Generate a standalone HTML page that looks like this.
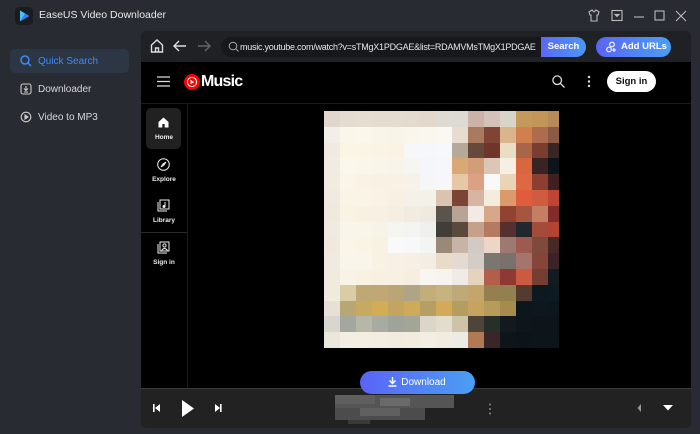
<!DOCTYPE html>
<html><head><meta charset="utf-8"><style>
*{margin:0;padding:0;box-sizing:border-box}
body{width:700px;height:434px;background:#282b31;font-family:"Liberation Sans",sans-serif;position:relative;overflow:hidden;color:#fff}
.abs{position:absolute}
.nav{position:absolute;left:10px;width:119px;height:24px;border-radius:5px;font-size:10px;color:#d5d7db;display:flex;align-items:center;padding-left:28px}
.nav svg{position:absolute;left:10px;top:6px}
#art{position:absolute;left:324px;top:111px;width:235px;height:237px;display:grid;grid-template-columns:repeat(14,16px) 11px;grid-template-rows:repeat(15,15.8px);overflow:hidden}
.yn{position:absolute;left:141px;width:46px;text-align:center;font-size:6.5px;font-weight:bold;color:#eee}
</style></head><body>
<svg class="abs" style="left:15px;top:7px" width="18" height="18" viewBox="0 0 18 18"><rect width="18" height="18" rx="4" fill="#1a1c20"/><path d="M5 3.5 L14.5 9 L5 14.5Z" fill="#3b7cf5"/><path d="M5 3.5 L10 6.5 L5 14.5Z" fill="#44c8f0"/></svg>
<div class="abs" style="left:39px;top:9px;font-size:10.5px;color:#e8e8e8">EaseUS Video Downloader</div>
<svg class="abs" style="left:588px;top:9px" width="104" height="14" viewBox="0 0 104 14" fill="none" stroke="#bbb" stroke-width="1.1"><path d="M1 3 L4 1 L6 3 L8 1 L11 3 L10 6 L9 6 L9 12 L3 12 L3 6 L2 6Z"/><rect x="24" y="1.5" width="10" height="10"/><path d="M26.5 5 L29 7.5 L31.5 5" fill="#bbb"/><path d="M46 8 L56 8"/><rect x="67" y="2" width="9" height="9"/><path d="M88 2 L98 12 M98 2 L88 12"/></svg>
<div class="nav" style="top:49px;background:#2c3645;color:#3d8cf5"><svg width="12" height="12" viewBox="0 0 12 12" fill="none" stroke="#3d8cf5" stroke-width="1.5"><circle cx="5" cy="5" r="4"/><path d="M8 8 L11 11"/></svg>Quick Search</div>
<div class="nav" style="top:77px"><svg width="12" height="12" viewBox="0 0 12 12" fill="none" stroke="#ccc" stroke-width="1.1"><rect x="1" y="1" width="10" height="10" rx="2"/><path d="M6 3 L6 7 M4 5.5 L6 7.5 L8 5.5 M4 9 L8 9"/></svg>Downloader</div>
<div class="nav" style="top:105px"><svg width="12" height="12" viewBox="0 0 12 12" fill="none" stroke="#ccc" stroke-width="1.1"><circle cx="6" cy="6" r="4.8"/><path d="M5 4 L8 6 L5 8Z" fill="#ccc"/></svg>Video to MP3</div>
<div class="abs" style="left:141px;top:31px;width:550px;height:397px;background:#222222;border-radius:6px;overflow:hidden">
 <div class="abs" style="left:0;top:0;width:550px;height:31px;background:#1f2124"></div>
 <div class="abs" style="left:0;top:31px;width:550px;height:326px;background:#000"></div>
 <div class="abs" style="left:0;top:357px;width:550px;height:1px;background:#3a3a3a"></div>
</div>
<svg class="abs" style="left:150px;top:38px" width="65" height="16" viewBox="0 0 65 16" fill="none" stroke-width="1.4"><path d="M1.5 7 L7 2 L12.5 7 L12.5 14 L1.5 14Z M5.5 14 L5.5 10 L8.5 10 L8.5 14" stroke="#ddd"/><path d="M36 8 L24 8 M29 3 L24 8 L29 13" stroke="#ddd"/><path d="M48 8 L60 8 M55 3 L60 8 L55 13" stroke="#666"/></svg>
<div class="abs" style="left:221px;top:37px;width:332px;height:20px;border-radius:10px;background:#16181b"></div>
<svg class="abs" style="left:228px;top:41px" width="11" height="11" viewBox="0 0 11 11" fill="none" stroke="#aaa" stroke-width="1"><circle cx="5" cy="5" r="3.8"/><path d="M7.8 7.8 L10.5 10.5"/></svg>
<div class="abs" style="left:240px;top:37px;width:301px;height:20px;overflow:hidden;white-space:nowrap;font-size:9px;letter-spacing:-0.25px;line-height:20px;color:#e6e6e6">music.youtube.com/watch?v=sTMgX1PDGAE&amp;list=RDAMVMsTMgX1PDGAE</div>
<div class="abs" style="left:541px;top:37px;width:45px;height:20px;border-radius:0 10px 10px 0;background:linear-gradient(90deg,#5b67f6,#4a98f4);font-size:9.5px;line-height:20px;text-align:center;font-weight:bold">Search</div>
<div class="abs" style="left:596px;top:37px;width:75px;height:20px;border-radius:10px;background:linear-gradient(90deg,#5b64f6,#4a9ef5);font-size:9.5px;line-height:20px;padding-left:25px;font-weight:bold">Add URLs</div>
<svg class="abs" style="left:606px;top:41px" width="12" height="12" viewBox="0 0 12 12" fill="none" stroke="#fff" stroke-width="1.1"><circle cx="6" cy="3.5" r="2.3"/><circle cx="3" cy="8.5" r="2.3"/><path d="M8 7 L8 11 M6 9 L10 9"/></svg>
<svg class="abs" style="left:157px;top:76px" width="13" height="11" viewBox="0 0 13 11" stroke="#ddd" stroke-width="1.3"><path d="M0 1 H13 M0 5.5 H13 M0 10 H13"/></svg>
<svg class="abs" style="left:184px;top:74px" width="16" height="16" viewBox="0 0 16 16"><circle cx="8" cy="8" r="8" fill="#f00"/><circle cx="8" cy="8" r="4.6" fill="none" stroke="#fff" stroke-width="1"/><path d="M6.5 5.7 L10.3 8 L6.5 10.3Z" fill="#fff"/></svg>
<div class="abs" style="left:201px;top:73px;font-size:16px;font-weight:bold;letter-spacing:-0.8px;color:#fff">Music</div>
<svg class="abs" style="left:552px;top:75px" width="13" height="13" viewBox="0 0 13 13" fill="none" stroke="#ddd" stroke-width="1.3"><circle cx="5.2" cy="5.2" r="4.3"/><path d="M8.4 8.4 L12.5 12.5"/></svg>
<svg class="abs" style="left:587px;top:75px" width="4" height="13"><circle cx="2" cy="2" r="1.2" fill="#ddd"/><circle cx="2" cy="6.5" r="1.2" fill="#ddd"/><circle cx="2" cy="11" r="1.2" fill="#ddd"/></svg>
<div class="abs" style="left:607px;top:71px;width:49px;height:21px;border-radius:11px;background:#fff;color:#0f0f0f;font-size:9.5px;line-height:21px;text-align:center;font-weight:bold">Sign in</div>
<div class="abs" style="left:141px;top:103px;width:550px;height:1px;background:#1a1a1a"></div>
<div class="abs" style="left:187px;top:104px;width:1px;height:284px;background:#1c1c1c"></div>
<div class="abs" style="left:146px;top:108px;width:35px;height:41px;border-radius:5px;background:#212121"></div>
<svg class="abs" style="left:158px;top:117px" width="11" height="11" viewBox="0 0 11 11"><path d="M5.5 0.5 L10.5 5 L10.5 10.5 L0.5 10.5 L0.5 5Z" fill="#fff"/><rect x="4.3" y="7" width="2.4" height="3.5" fill="#212121"/></svg>
<div class="yn" style="top:134px">Home</div>
<svg class="abs" style="left:157px;top:158px" width="13" height="13" viewBox="0 0 13 13" fill="none" stroke="#eee" stroke-width="1"><circle cx="6.5" cy="6.5" r="5.8"/><path d="M9 4 L7 7 L4 9 L6 6Z" fill="#eee"/></svg>
<div class="yn" style="top:176px">Explore</div>
<svg class="abs" style="left:157px;top:199px" width="13" height="13" viewBox="0 0 13 13" fill="none" stroke="#eee" stroke-width="1"><rect x="3" y="1" width="9" height="9"/><path d="M1 3 L1 12 L10 12"/><path d="M8 3 L8 7.5" /><circle cx="7" cy="7.5" r="1" fill="#eee"/></svg>
<div class="yn" style="top:217px">Library</div>
<div class="abs" style="left:141px;top:232px;width:46px;height:1px;background:#2a2a2a"></div>
<svg class="abs" style="left:157px;top:241px" width="13" height="13" viewBox="0 0 13 13" fill="none" stroke="#eee" stroke-width="1"><rect x="3" y="1" width="9" height="9"/><path d="M1 3 L1 12 L10 12"/><circle cx="7.5" cy="4.5" r="1.6"/><path d="M4.5 9.5 Q7.5 5.5 10.5 9.5"/></svg>
<div class="yn" style="top:259px">Sign in</div>
<div id="art"></div>
<script>
var c=["e0d8cc e3dccf e5ddd0 e4dccf e4dccf e3dbce e2d9cc e0dbd2 dcdad3 cbb3a8 d4c1b8 d8d5c8 c49a5a c39558 b88a5a",
"f2efe8 fbf6ea fbf7ea faf5e9 f9f4e8 faf6ec faf7ee f9f8f2 e8dcd0 a97a60 7f4433 dab48c d17f4f ad6b4f 8b5a44",
"f0ebe1 fbf5e6 fbf5e5 faf4e4 faf3e3 f6f7fa f6f7fb f7f8fb b4aa9a 654a3c 70352a ebdcc4 a86548 7a3e30 3a2424",
"f1ece2 fbf7ed fbf6ea faf5ea f9f4e9 f7f5ef f5f6f9 f6f7fa d9a874 d49d7a dcc7b5 f5efe4 d9663c 3a2323 0d151b",
"f1ebe0 fbf5e8 faf3e5 f9f1e3 f9f2e4 f7f2e8 f6f6f8 f7f7f9 e6c9a4 dca083 f9f9fa ead4b7 df6844 8c3e30 40201f",
"f0ebe1 faf4e7 faf4e6 f9f3e5 f7f0e3 f5f0e9 f4f1e9 dcc3b0 7c4435 d6b6a2 f4ecdd dc9a6b e05c3b d05c40 c04432",
"f0e9dd f9f3e4 f8f1e2 f8f0e2 f6eee0 f2ebdf eeeae0 5b544a b8a396 f2ebe5 d6a788 924232 a55540 c47e63 7f2c2b",
"f0ebe1 f9f5ea f9f5e9 f7f3e8 f7f5ef f4f4f2 f0f0ec 3f3e39 5a4a3e c5a18a b57a62 56302c 21272d a44c3c b34433",
"f0e9dc faf5e6 f9f4e4 f8f2e2 f9f9fb f7f8fa f3f5f5 9a8977 c8b4a6 d3cac3 edd5c7 9c7a73 9e5a4f 7e4a3e 472827",
"efebe2 f9f5ea f9f5ea f8f2e5 f7f1e5 f5efe5 f3ede3 e8dcc8 e5dad2 d3cdc6 7a7672 7a706c a7736d 86453a 3b2226",
"f0eadf f9f3e6 f9f2e2 f8f0e0 f8f1e2 f6efe1 f8f6f0 f5f4ef f0ebe4 e6d3be b35e4a 8e3a32 cc5a40 763d33 131b22",
"f0ebdf dacda5 bea874 c0a874 bba574 aea486 c3ad79 c7b37f bfa978 c2a66c 957f4f 92804e 553a30 0d1820 0e1a22",
"e5e1d6 b8a673 c7a95f d3ad55 c3a560 cfaa58 b59f64 d4aa58 b39e60 c6a45f b79c59 a58c4e 0b161d 0c171e 0c161d",
"d8d6cf a4a79f b6b6ab a8aba2 a0a39a a2a598 dcd6c8 e3ddcd cdc3a8 4f4439 243029 121a1e 0e161c 0d151b 0d151b",
"ece7dc f2eee4 f4eee2 f3ede1 f1ebdf f2ecdf f3eee3 f1ebe0 ecebe5 b07a55 3b2627 0d151b 0c141a 0d151b 0d151b"];
var h="";c.forEach(function(r){r.split(" ").forEach(function(x){h+='<div style="background:#'+x+'"></div>'})});
document.getElementById("art").innerHTML=h;
</script>
<div class="abs" style="left:360px;top:371px;width:115px;height:23px;border-radius:12px;background:linear-gradient(90deg,#5a63f6,#4a9ff5);font-size:10px;line-height:23px;text-align:center;padding-left:12px">Download</div>
<svg class="abs" style="left:388px;top:377px" width="9" height="10" viewBox="0 0 9 10" stroke="#fff" stroke-width="1.4" fill="none"><path d="M4.5 0 L4.5 6 M1.5 3.5 L4.5 6.5 L7.5 3.5 M0.5 9 L8.5 9"/></svg>
<svg class="abs" style="left:153px;top:400px" width="80" height="18" viewBox="0 0 80 18" fill="#fff"><rect x="0" y="4" width="1.6" height="8"/><path d="M2 8 L7 4 L7 12Z"/><path d="M29 0 L41 8.5 L29 17Z"/><path d="M62 4 L67 8 L62 12Z"/><rect x="67" y="4" width="1.6" height="8"/></svg>
<div class="abs" style="left:335px;top:395px;width:119px;height:13px;background:#555"></div>
<div class="abs" style="left:335px;top:395px;width:40px;height:9px;background:#5f5f5f"></div>
<div class="abs" style="left:380px;top:398px;width:30px;height:8px;background:#6a6a6a"></div>
<div class="abs" style="left:335px;top:408px;width:90px;height:12px;background:#4c4c4c"></div>
<div class="abs" style="left:360px;top:408px;width:40px;height:8px;background:#606060"></div>
<div class="abs" style="left:348px;top:420px;width:22px;height:4px;background:#3a3a3a"></div>
<svg class="abs" style="left:488px;top:403px" width="4" height="12"><circle cx="2" cy="1.5" r="1" fill="#888"/><circle cx="2" cy="6" r="1" fill="#888"/><circle cx="2" cy="10.5" r="1" fill="#888"/></svg>
<svg class="abs" style="left:637px;top:403px" width="40" height="10" viewBox="0 0 40 10"><path d="M4 1 L0.5 5 L4 9Z" fill="#999"/><path d="M26 2 L36 2 L31 7.5Z" fill="#fff"/></svg>
</body></html>
